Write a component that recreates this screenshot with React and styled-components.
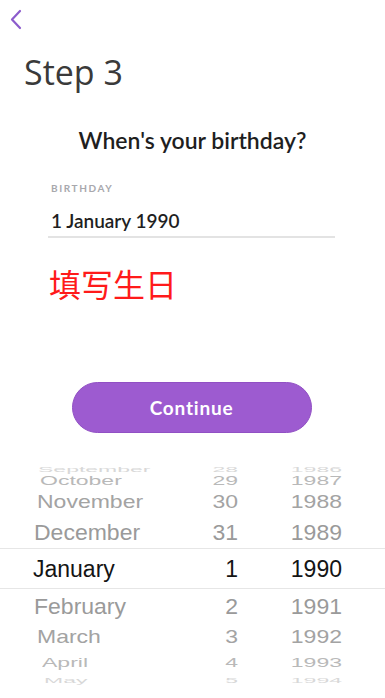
import React from 'react'
import styled, { createGlobalStyle } from 'styled-components'

const GlobalStyle = createGlobalStyle`
  html, body {
    margin: 0;
    padding: 0;
    background: #fff;
  }
  body {
    font-family: "Open Sans", "Noto Sans", sans-serif;
  }
`

const Screen = styled.div`
  width: 385px;
  height: 698px;
  overflow: hidden;
  background: #fff;
  display: flex;
  flex-direction: column;
`

const BackButton = styled.button`
  border: none;
  background: none;
  padding: 0;
  margin: 8px 0 0 6px;
  width: 20px;
  height: 24px;
  display: flex;
  cursor: pointer;
`

const StepTitle = styled.h1`
  margin: 18px 0 0 24px;
  font-family: "Open Sans", sans-serif;
  font-weight: 400;
  font-size: 34px;
  line-height: 44px;
  color: #3a3a3a;
`

const Question = styled.h2`
  margin: 31px 0 0;
  text-align: center;
  font-family: Lato, "Open Sans", sans-serif;
  font-weight: 600;
  font-size: 23px;
  line-height: 30px;
  color: #1f1f1f;
`

const Field = styled.div`
  margin: 27px 50px 0 48px;
  border-bottom: 2px solid #e3e3e3;
  padding-bottom: 3px;
`

const FieldLabel = styled.div`
  padding-left: 3px;
  font-family: Lato, sans-serif;
  font-weight: 700;
  font-size: 10px;
  letter-spacing: 1.6px;
  color: #a8a8ad;
  line-height: 12px;
`

const FieldValue = styled.div`
  margin-top: 15px;
  padding-left: 3px;
  font-family: Lato, sans-serif;
  font-weight: 600;
  font-size: 19px;
  line-height: 24px;
  color: #1f1f1f;
`

const Note = styled.div`
  margin: 24px 0 0 49px;
  font-family: "Noto Sans CJK SC", sans-serif;
  font-size: 32px;
  line-height: 42px;
  color: #ff1a1a;
`

const ContinueButton = styled.button`
  align-self: center;
  margin: 78px 0 0 -2px;
  width: 240px;
  height: 51px;
  border-radius: 26px;
  border: 1px solid #9150c4;
  background: #9d5bd0;
  color: #fff;
  font-family: Lato, sans-serif;
  font-weight: 700;
  font-size: 19px;
  letter-spacing: 0.8px;
  cursor: pointer;
`

const Picker = styled.div`
  margin-top: 25px;
  display: flex;
  flex-direction: column;
`

const PickerRow = styled.div`
  height: ${p => p.$h}px;
  display: grid;
  grid-template-columns: 172px 66px 104px;
  align-items: center;
  border-top: ${p => (p.$selected ? '1px solid #e6e6e6' : 'none')};
  border-bottom: ${p => (p.$selected ? '1px solid #e6e6e6' : 'none')};
  font-family: "Liberation Sans", Arial, sans-serif;
  font-size: 23px;
  color: ${p => p.$color};
  overflow: visible;
`

const Cell = styled.span`
  display: block;
  white-space: nowrap;
  line-height: 24px;
  transform: scaleY(${p => p.$scale});
  text-align: ${p => p.$align || 'left'};
  padding-left: ${p => p.$indent || 0}px;
`

const rows = [
  { m: 'September', d: '28', y: '1986', h: 11, s: 0.28, c: '#d8d8d8', i: 38 },
  { m: 'October', d: '29', y: '1987', h: 18, s: 0.55, c: '#b9b9b9', i: 40 },
  { m: 'November', d: '30', y: '1988', h: 29, s: 0.8, c: '#a3a3a3', i: 37 },
  { m: 'December', d: '31', y: '1989', h: 32, s: 0.95, c: '#9a9a9a', i: 34 },
  { m: 'January', d: '1', y: '1990', h: 39, s: 1, c: '#141414', i: 33, sel: true },
  { m: 'February', d: '2', y: '1991', h: 33, s: 0.95, c: '#9a9a9a', i: 34 },
  { m: 'March', d: '3', y: '1992', h: 29, s: 0.8, c: '#a3a3a3', i: 37 },
  { m: 'April', d: '4', y: '1993', h: 18, s: 0.55, c: '#b9b9b9', i: 42 },
  { m: 'May', d: '5', y: '1994', h: 11, s: 0.28, c: '#d8d8d8', i: 44 },
]

function ChevronLeft() {
  return (
    <svg width="20" height="24" viewBox="0 0 20 24" fill="none">
      <path d="M14 3 L6 11.5 L14 20" stroke="#8c5ccc" strokeWidth="2.2" strokeLinecap="round" strokeLinejoin="round" />
    </svg>
  )
}

export default function App() {
  return (
    <>
      <GlobalStyle />
      <Screen>
        <BackButton aria-label="back">
          <ChevronLeft />
        </BackButton>
        <StepTitle>Step 3</StepTitle>
        <Question>When's your birthday?</Question>
        <Field>
          <FieldLabel>BIRTHDAY</FieldLabel>
          <FieldValue>1 January 1990</FieldValue>
        </Field>
        <Note>填写生日</Note>
        <ContinueButton>Continue</ContinueButton>
        <Picker>
          {rows.map(r => (
            <PickerRow key={r.m} $h={r.h} $color={r.c} $selected={r.sel}>
              <Cell $scale={r.s} $indent={r.i}>{r.m}</Cell>
              <Cell $scale={r.s} $align="right">{r.d}</Cell>
              <Cell $scale={r.s} $align="right">{r.y}</Cell>
            </PickerRow>
          ))}
        </Picker>
      </Screen>
    </>
  )
}
